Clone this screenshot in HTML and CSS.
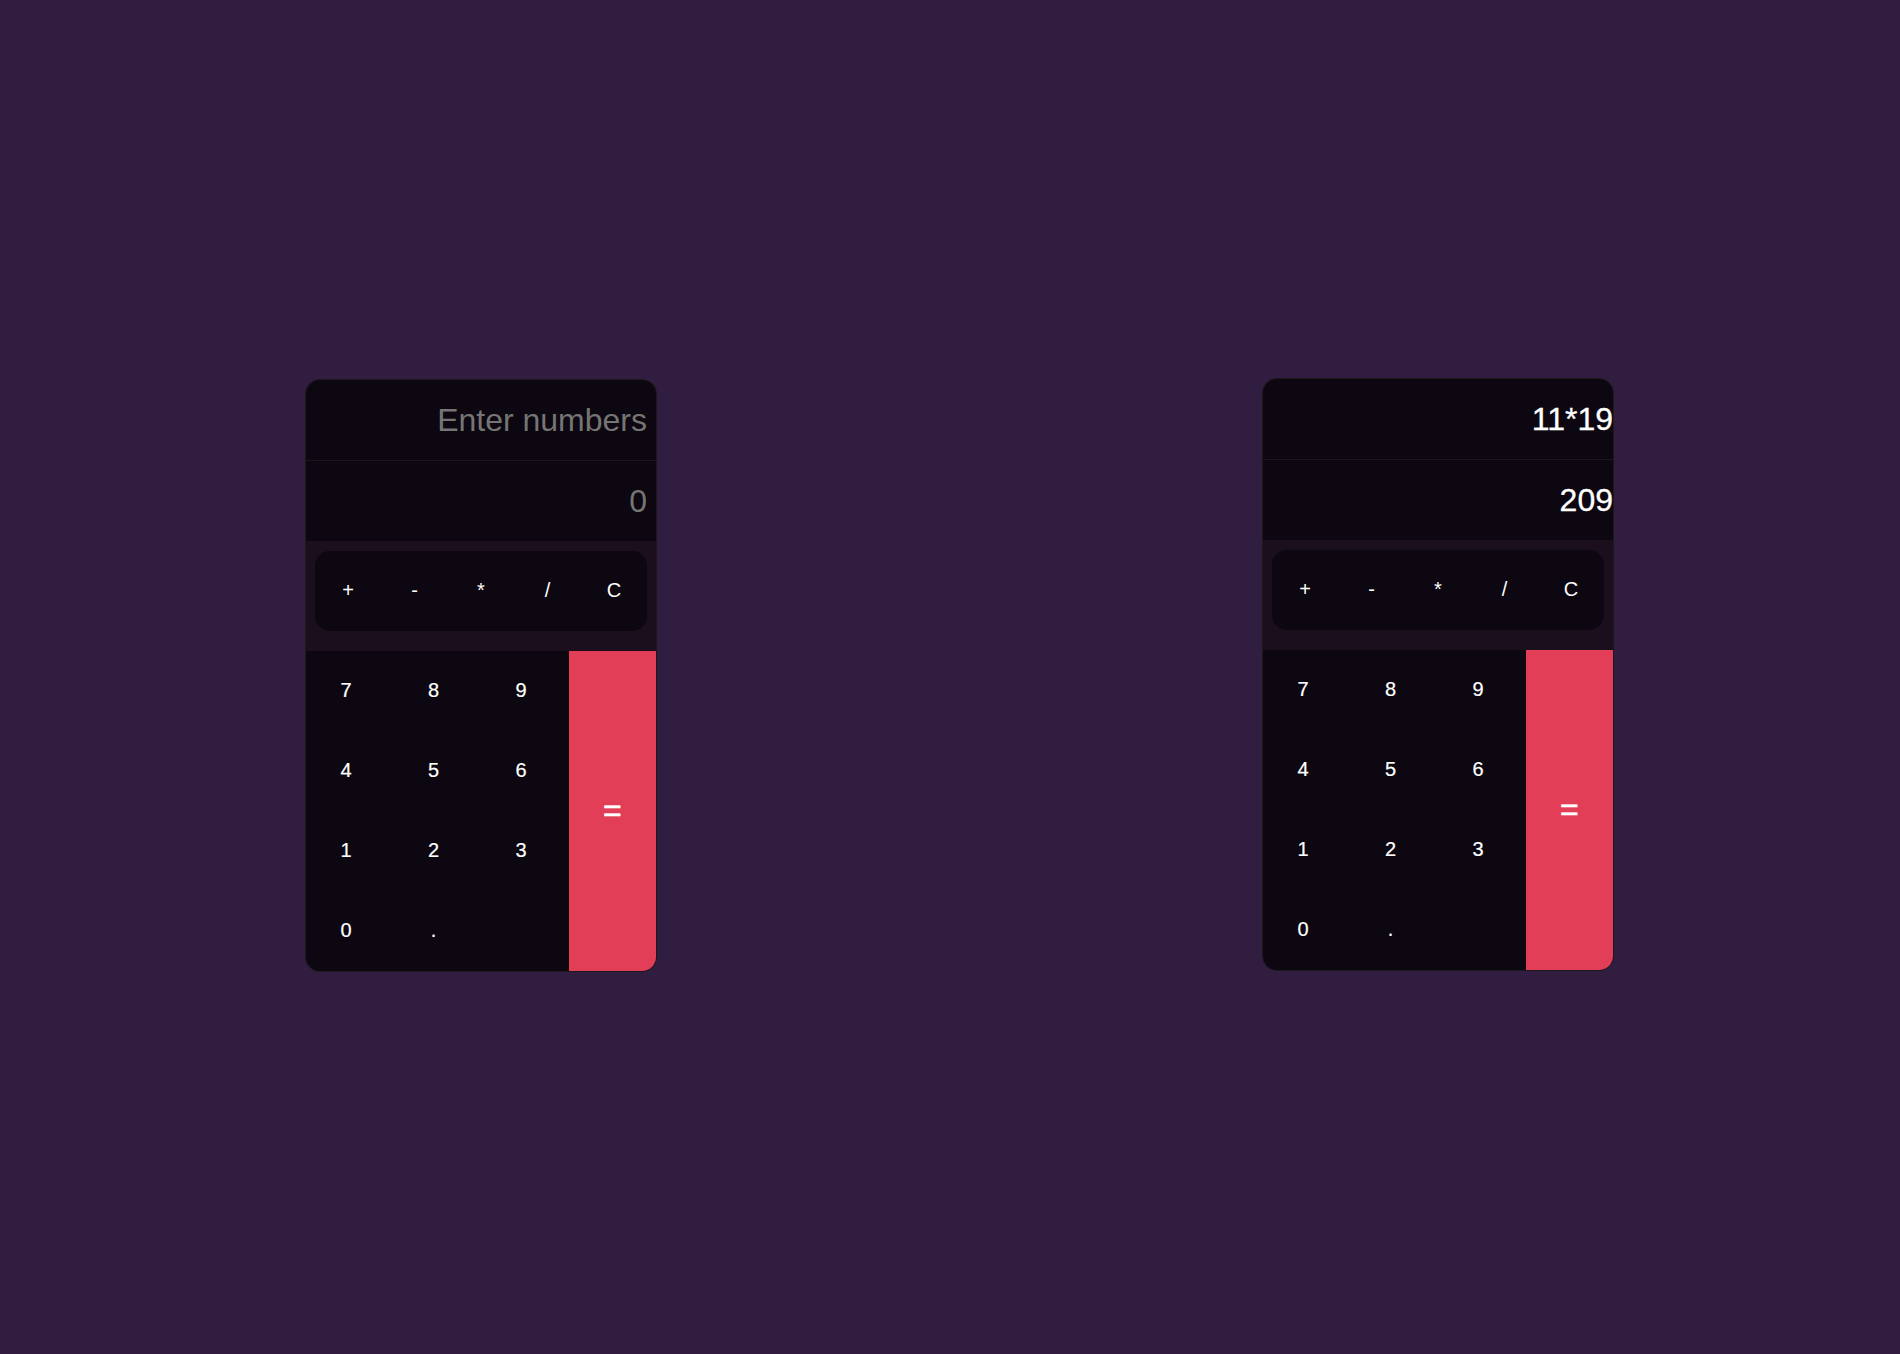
FILE: index.html
```html
<!DOCTYPE html>
<html lang="en">
<head>
<meta charset="utf-8">
<title>Calculator</title>
<link rel="stylesheet" href="styles.css">
</head>
<body>
<main class="stage">
  <section class="calculator calculator--empty">
    <div class="display placeholder">Enter numbers</div>
    <div class="display display--result placeholder">0</div>
    <div class="operators">
      <div class="operator-bar"><span>+</span><span>-</span><span>*</span><span>/</span><span>C</span></div>
    </div>
    <div class="keypad">
      <div class="digits">
        <span class="key">7</span><span class="key">8</span><span class="key">9</span>
        <span class="key">4</span><span class="key">5</span><span class="key">6</span>
        <span class="key">1</span><span class="key">2</span><span class="key">3</span>
        <span class="key">0</span><span class="key">.</span>
      </div>
      <div class="equals">=</div>
    </div>
  </section>
  <section class="calculator calculator--filled">
    <div class="display">11*19</div>
    <div class="display display--result">209</div>
    <div class="operators">
      <div class="operator-bar"><span>+</span><span>-</span><span>*</span><span>/</span><span>C</span></div>
    </div>
    <div class="keypad">
      <div class="digits">
        <span class="key">7</span><span class="key">8</span><span class="key">9</span>
        <span class="key">4</span><span class="key">5</span><span class="key">6</span>
        <span class="key">1</span><span class="key">2</span><span class="key">3</span>
        <span class="key">0</span><span class="key">.</span>
      </div>
      <div class="equals">=</div>
    </div>
  </section>
</main>
</body>
</html>
```

FILE: styles.css
```css
* {
  box-sizing: border-box;
}

body {
  margin: 0;
  background: #311d3f;
  color: #fff;
  font-family: "Liberation Sans", Arial, sans-serif;
}

.stage {
  display: flex;
  align-items: flex-start;
  gap: 605px;
  height: 1354px;
  padding: 378px 0 0 305px;
}

.calculator {
  flex: none;
  width: 352px;
  overflow: hidden;
  border: 1px solid #1e181d;
  border-radius: 15px;
  background: #0c0710;
}

.calculator--empty {
  margin-top: 1px;
}

.display {
  height: 81px;
  border-bottom: 1px solid #1c171b;
  font-size: 32px;
  line-height: 80px;
  text-align: right;
  -webkit-text-stroke: 0.3px currentColor;
}

.display--result {
  height: 80px;
  border-bottom: 0;
}

.placeholder {
  padding-right: 9px;
  color: #757575;
  -webkit-text-stroke: 0;
}

.operators {
  height: 110px;
  padding: 10px 8.75px 20px;
  background: #1b0f1e;
}

.operator-bar {
  display: grid;
  grid-template-columns: repeat(5, 1fr);
  height: 80px;
  border-radius: 15px;
  background: #0c0710;
  font-size: 20px;
  line-height: 78px;
  text-align: center;
}

.keypad {
  display: flex;
  height: 320px;
}

.digits {
  display: grid;
  grid-template-columns: repeat(3, 87.5px);
  grid-auto-rows: 80px;
}

.key {
  width: 80px;
  font-size: 20px;
  line-height: 78px;
  text-align: center;
  -webkit-text-stroke: 0.2px currentColor;
}

.equals {
  flex: 1;
  background: #e23e57;
  font-size: 32px;
  line-height: 318px;
  text-align: center;
  -webkit-text-stroke: 0.6px currentColor;
}
```
